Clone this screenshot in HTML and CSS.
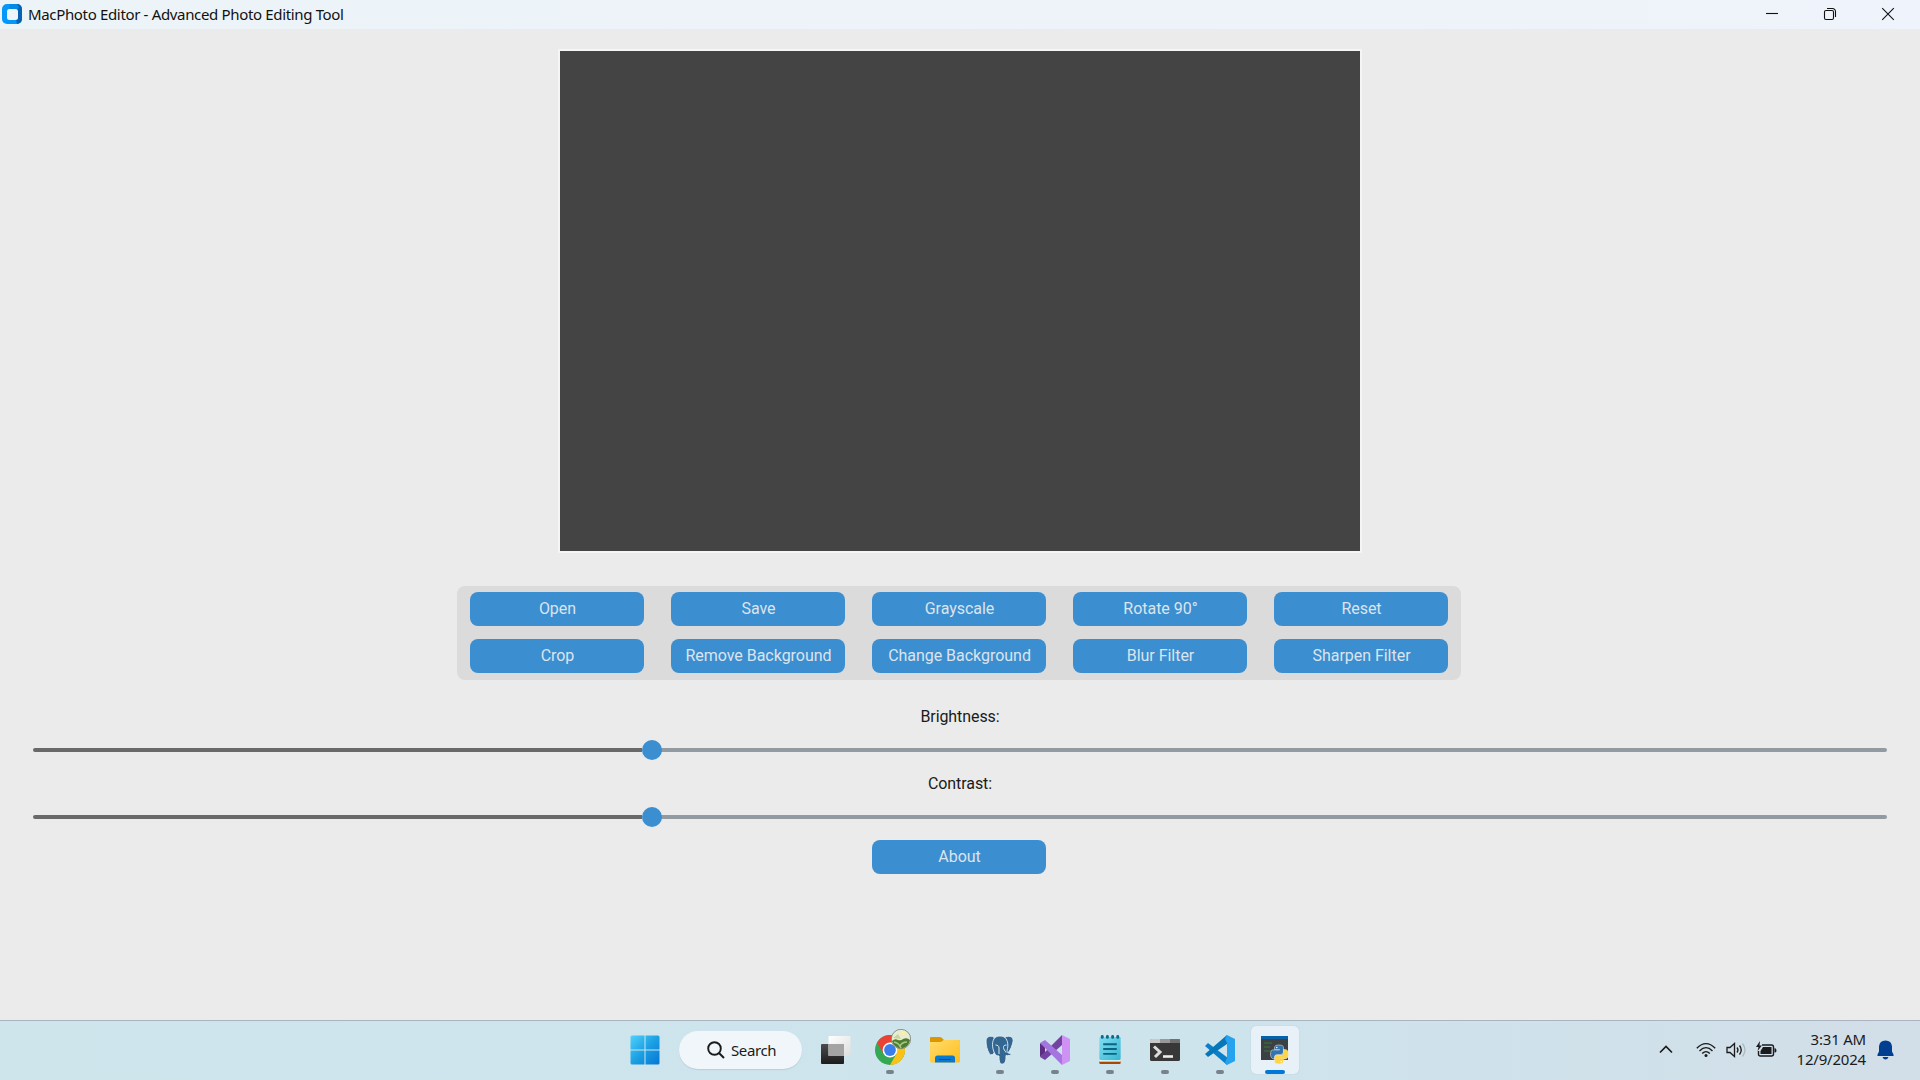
FILE: index.html
```html
<!DOCTYPE html>
<html lang="en">
<head>
<meta charset="utf-8">
<title>MacPhoto Editor</title>
<link rel="stylesheet" href="styles.css">
</head>
<body>
<header class="titlebar">
  <svg class="app-icon" width="20" height="20" viewBox="0 0 20 20"><rect width="20" height="20" rx="5" fill="#0498fb"/><path d="M15 0a5 5 0 0 1 5 5v10a5 5 0 0 1-5 5l-1-5 1-10z" fill="#0663b1"/><path d="M7 0h8l2 3-2 3H8z" fill="#0689e5"/><rect x="5" y="5" width="11" height="11" rx="2.5" fill="#eef5fa"/></svg>
  <span class="window-title">MacPhoto Editor - Advanced Photo Editing Tool</span>
  <div class="window-controls">
    <button class="control"><svg width="14" height="14" viewBox="0 0 14 14"><path d="M1 6.5h12"/></svg></button>
    <button class="control"><svg width="14" height="14" viewBox="0 0 14 14"><rect x="1.5" y="3.5" width="9" height="9" rx="1.5"/><path d="M4 1.5h5.5a3 3 0 0 1 3 3V10"/></svg></button>
    <button class="control"><svg width="14" height="14" viewBox="0 0 14 14"><path d="M1.2 1.2l11.6 11.6M12.8 1.2L1.2 12.8"/></svg></button>
  </div>
</header>
<main class="editor">
  <div class="canvas"></div>
  <div class="tools">
    <button class="btn">Open</button>
    <button class="btn">Save</button>
    <button class="btn">Grayscale</button>
    <button class="btn">Rotate 90°</button>
    <button class="btn">Reset</button>
    <button class="btn">Crop</button>
    <button class="btn">Remove Background</button>
    <button class="btn">Change Background</button>
    <button class="btn">Blur Filter</button>
    <button class="btn">Sharpen Filter</button>
  </div>
  <div class="adjust">
    <span class="label">Brightness:</span>
    <div class="slider"><span class="filled"></span><span class="knob"></span><span class="rest"></span></div>
  </div>
  <div class="adjust">
    <span class="label">Contrast:</span>
    <div class="slider"><span class="filled"></span><span class="knob"></span><span class="rest"></span></div>
  </div>
  <button class="btn about">About</button>
</main>
<footer class="taskbar">
  <div class="apps">
    <div class="app start"><svg width="30" height="30" viewBox="0 0 30 30"><defs><linearGradient id="win" gradientUnits="userSpaceOnUse" x1="0" y1="0" x2="30" y2="30"><stop offset="0" stop-color="#50d3fd"/><stop offset=".5" stop-color="#1ba0e4"/><stop offset="1" stop-color="#0574d3"/></linearGradient></defs><path fill="url(#win)" d="M2 .5h12.500v14H.5V2Q.5.500 2 .5zM15.500.500H28q1.500 0 1.500 1.500v12.500h-14zM.500 15.500h14v14H2Q.500 29.500.500 28zM15.500 15.500h14V28q0 1.500-1.500 1.500H15.500z"/></svg></div>
    <div class="search"><svg width="18" height="18" viewBox="0 0 18 18" fill="none" stroke="#1b1b1b" stroke-width="1.900"><circle cx="7.500" cy="7.500" r="6.300"/><path d="M12 12l5 5"/></svg><span>Search</span></div>
    <div class="app taskview"><svg width="30" height="30" viewBox="0 0 30 30"><defs><linearGradient id="tvd" x1="0" y1="0" x2="0" y2="1"><stop offset="0" stop-color="#4b4b4b"/><stop offset="1" stop-color="#1c1c1c"/></linearGradient><linearGradient id="tvl" x1="0" y1="0" x2="1" y2="1"><stop offset="0" stop-color="#fff"/><stop offset="1" stop-color="#dedede"/></linearGradient></defs><rect x="0" y="9" width="23" height="20" rx="1" fill="url(#tvd)"/><rect x="7.500" y="1" width="22" height="20" rx="1" fill="url(#tvl)"/><path d="M7.500 9H23v12H7.500z" fill="#a4a4a4"/></svg></div>
    <div class="app chrome running"><svg width="36" height="36" viewBox="0 0 36 36"><circle cx="15" cy="21" r="15" fill="#34a853"/><path d="M2 13.500A15 15 0 0 1 28 13.500H15L8.500 24.750z" fill="#ea4335"/><path d="M28 13.500A15 15 0 0 1 15 36l6.500-11.250L15 13.500z" fill="#fbc116"/><circle cx="15" cy="21" r="7.400" fill="#fff"/><circle cx="15" cy="21" r="5.900" fill="#3b7ded"/><circle cx="26" cy="10" r="9.700" fill="#e9edd0" stroke="#777d75" stroke-width=".8"/><path d="M17 12q3-3 6-1 3 1 5-1 4-2 7 1-1 7-9 8.500-7-1-9-7.500z" fill="#4c7c30"/><path d="M19 13q5 1 7 6M25 17q2-4 7-4" stroke="#a9c884" stroke-width="1.600" fill="none"/><circle cx="28.500" cy="4" r="1.700" fill="#fff19b"/><path d="M18 9l5-4 3 5z" fill="#c5d59c"/></svg></div>
    <div class="app folder"><svg width="32" height="28" viewBox="0 0 32 28"><defs><linearGradient id="fold" x1="0" y1="0" x2="1" y2="1"><stop offset="0" stop-color="#ffdc6d"/><stop offset="1" stop-color="#ffbd1b"/></linearGradient></defs><path d="M1 2Q1 1 2 1h9q1.500 0 2.500 1.500L15 4h15q1 0 1 1v9H1z" fill="#dc9700"/><path d="M1 6h10q1.500 0 2.500-1l1-1H30q1 0 1 1v20q0 1.500-1.500 1.500h-27Q1 26.500 1 25z" fill="url(#fold)"/><path d="M6 26.500V22q0-2.500 2.500-2.500h15Q26 19.500 26 22v4.500z" fill="#0879d0"/><path d="M10 23.500h12" stroke="#064d99"/></svg></div>
    <div class="app postgres running"><svg width="30" height="30" viewBox="0 0 30 30"><g fill="#336791" stroke="#e3eff5" stroke-width=".9"><path d="M9 2C5 0 1 2 1 6c0 4 1 9 3.500 13 1.500 2 3 1 4.500-1l2-3z"/><path d="M20 2c5-2 9 0 8 5-1 4-2 7-5 11l-3-2z"/><path d="M10 2.500c3-2 7-2 10 0 3 3 3.500 8 2 13 0 2 1 3 5 3-1 2-4 2.500-6 2 0 4 0 8-3.500 8.500-3 .5-3.500-3-3.500-8-2 0-4-1-4.500-3C7 13 6.500 6 10 2.500z"/></g><path d="M14 19v-6c0-2-1.500-3-3.500-3M21.500 10c-2.500 0-3 1-3 2.500 0 2 1.500 3 2.500 5M10 19c-2 1-3 1-4 .5" stroke="#dceaf1" fill="none"/></svg></div>
    <div class="app vs running"><svg width="30" height="30" viewBox="0 0 30 30"><path d="M0 8v14l5-4v-7z" fill="#5b2e83"/><path d="M5 25L22 10V0L8 14 0 22z" fill="#7243a0"/><path d="M0 8l5-3 17 15v10L5 13z" fill="#a575df"/><path d="M22 0l8 4v22l-8 4z" fill="#ce91f4"/></svg></div>
    <div class="app notepad running"><svg width="24" height="31" viewBox="0 0 24 32"><defs><linearGradient id="note" x1="0" y1="0" x2="1" y2="1"><stop stop-color="#80def2"/><stop offset="1" stop-color="#39b5d1"/></linearGradient></defs><path d="M1 27h22v3q0 1-1 1H2q-1 0-1-1z" fill="#a94800"/><path d="M1 26h22v2.500H1z" fill="#fff"/><rect x="1" y="3" width="22" height="24" rx="1.500" fill="url(#note)"/><path d="M5 10.500h14M5 15.500h14M5 20.500h14" stroke="#086583" stroke-width="2"/><path d="M4 2.500v1M9.300 2.500v1M14.700 2.500v1M20 2.500v1" stroke="#076c89" stroke-width="3" stroke-linecap="round"/></svg></div>
    <div class="app terminal running"><svg width="30" height="24" viewBox="0 0 30 24"><rect y="1" width="30" height="22" rx="1.500" fill="#383838"/><path d="M0 5V2q0-1 1-1h9v4z" fill="#c9c9c9"/><path d="M10 1h10v4H10z" fill="#999"/><path d="M20 1h9q1 0 1 1v3H20z" fill="#707070"/><path d="M4 8.500l6 5.500-5 5" stroke="#ddd" stroke-width="3" fill="none"/><path d="M13 18.500h10" stroke="#eee" stroke-width="2.600"/></svg></div>
    <div class="app code running"><svg width="30" height="30" viewBox="0 0 30 30"><path d="M0 11l3-3 20 15-1 7z" fill="#0a7fca"/><path d="M0 19L22 0v9L3 22z" fill="#0877b9"/><path d="M22 0l8 4v22l-8 4-2-3 2-4V8l-2-4z" fill="#25a3ef"/></svg></div>
    <div class="app python running active"><svg width="30" height="30" viewBox="0 0 30 30"><path d="M1 1h27v24H1z" fill="#3d4144"/><path d="M1 1h27v3H1z" fill="#0862a5"/><path d="M4 8h8M4 12h6M4 16h7" stroke="#377b3a" stroke-width="1.200"/><g stroke="#eef2f5" stroke-width=".5"><path d="M14.500 14.500v-2q0-2.500 4.500-2.500t4.500 2.500V17q0 2.500-2.500 2.500h-4q-2.500 0-2.500 3V24q-4 0-4-5t4-4h5v-.500z" fill="#3474ac"/><path d="M23.500 14.500q5-.5 5 4.500t-4 5h-5v.5h4v2q0 2.500-4.500 2.500t-4.500-2.500v-4q0-2.500 2.500-2.500h4q2.500 0 2.500-3z" fill="#ffd548"/></g><circle cx="16.800" cy="12.500" r=".8" fill="#fff"/><circle cx="21.200" cy="26.500" r=".8" fill="#fff"/></svg></div>
  </div>
  <div class="tray">
    <svg class="chevron" width="14" height="9" viewBox="0 0 14 9" fill="none" stroke="#1b1b1b" stroke-width="1.700"><path d="M1 7.500L7 1.500l6 6"/></svg>
    <svg class="wifi" width="20" height="16" viewBox="0 0 20 16" fill="none" stroke="#1b1b1b" stroke-width="1.400"><path d="M.800 6.200q9.200-9.200 18.400 0M3.500 8.900q6.500-6.500 13 0M6.200 11.500q3.800-3.800 7.600 0"/><circle cx="10" cy="13.500" r="1.500" fill="#1b1b1b" stroke="none"/></svg>
    <svg class="volume" width="21" height="16" viewBox="0 0 21 16" fill="none" stroke="#1b1b1b" stroke-width="1.300"><path d="M1 5.500h3l4.500-4v13L4 10.500H1zM11 5.500q2 2.500 0 5M13.500 3.500q3.500 4.500 0 9"/><path d="M16.500 1.500q5 6.500 0 13" stroke="#aeb9c0"/></svg>
    <svg class="battery" width="21" height="17" viewBox="0 0 21 17"><path d="M6 4h9.500q2 0 2 2v7q0 2-2 2h-11q-2 0-2-2v-3" fill="none" stroke="#1b1b1b" stroke-width="1.400"/><path d="M7 6h8.500v7h-11v-3z" fill="#1b1b1b"/><path d="M18.500 7q2 0 2 2.500t-2 2zM4 0L0 6h2.500L1.500 10 6 4.500H3.500z" fill="#1b1b1b"/></svg>
    <div class="clock"><span class="time">3:31 AM</span><span class="date">12/9/2024</span></div>
    <svg class="bell" width="17" height="20" viewBox="0 0 17 20"><path d="M8.500.500q6 0 6.500 6v5l1.500 3v1.500H.500v-1.500l1.500-3v-5q.500-6 6.500-6zM5.500 17h6q-1 2.500-3 2.500t-3-2.500z" fill="#003e92"/></svg>
  </div>
</footer>
</body>
</html>
```
FILE: styles.css
```css
* { box-sizing: border-box; }
body {
  margin: 0;
  width: 1920px;
  height: 1080px;
  overflow: hidden;
  display: flex;
  flex-direction: column;
  background: #ebebeb;
  font-family: Roboto, sans-serif;
}
button { border: 0; padding: 0; font: inherit; }
.titlebar {
  height: 29px;
  flex: none;
  display: flex;
  align-items: center;
  padding: 0 3px 1px 2px;
  background: linear-gradient(90deg, #ecf4f8, #eff3fb);
}
.app-icon { margin-right: 6px; }
.window-title {
  font: 15px/20px "Noto Sans", sans-serif;
  letter-spacing: -.34px;
  color: #111;
  white-space: nowrap;
}
.window-controls { display: flex; margin-left: auto; }
.control {
  width: 58px;
  height: 28px;
  display: flex;
  align-items: center;
  justify-content: center;
  background: none;
}
.control svg { fill: none; stroke: #111; stroke-width: 1.1; }
.editor {
  flex: 1;
  display: flex;
  flex-direction: column;
  align-items: center;
  padding: 20px 33px 0;
}
.canvas {
  width: 804px;
  height: 504px;
  flex: none;
  background: #444;
  border: 2px solid #f5f5f5;
}
.tools {
  width: 1004px;
  height: 94px;
  margin: 33px 2px 23px 0;
  padding: 6px 13px;
  display: grid;
  grid-template-columns: repeat(5, 174px);
  grid-auto-rows: 34px;
  gap: 13px 27px;
  border-radius: 8px;
  background: #dbdbdb;
}
.btn {
  width: 174px;
  height: 34px;
  border-radius: 8px;
  background: #3b8ed0;
  color: #dce4ee;
  font-size: 16px;
  line-height: 34px;
  padding-left: 1px;
  letter-spacing: -.03px;
  white-space: nowrap;
}
.adjust {
  width: 100%;
  height: 67px;
  display: flex;
  flex-direction: column;
  align-items: center;
}
.label { height: 37px; padding-top: 4px; font-size: 16px; line-height: 20px; letter-spacing: -.08px; color: #1a1a1a; }
.slider { width: 100%; height: 20px; display: flex; align-items: center; }
.filled { width: 609px; height: 4px; margin-right: -2px; border-radius: 2px 0 0 2px; background: #696969; }
.knob { width: 20px; height: 20px; margin-left: 2px; border-radius: 50%; background: #3b8ed0; z-index: 1; }
.rest { flex: 1; height: 4px; margin-left: -2px; border-radius: 0 2px 2px 0; background: #939ba2; }
.about { margin: 3px 2px 0 0; }
.taskbar {
  height: 60px;
  flex: none;
  display: grid;
  grid-template-columns: 619px 1fr auto;
  border-top: 1px solid #a9b4be;
  background: linear-gradient(90deg, #cfe5ec, #cee4ed 65%, #d2dee8);
}
.apps { grid-column: 2; display: flex; align-items: center; padding-bottom: 2px; }
.app {
  width: 48px;
  height: 48px;
  margin-right: 7px;
  display: flex;
  align-items: center;
  justify-content: center;
  position: relative;
  border-radius: 5px;
}
.start { width: 53px; margin-right: 7px; }
.start svg { margin-right: 1px; }
.search {
  width: 123px;
  height: 38px;
  margin-right: 9px;
  padding-left: 28px;
  display: flex;
  align-items: center;
  gap: 6px;
  border-radius: 19px;
  background: #f0f6fa;
  box-shadow: 0 1px 1px #b7ced8;
  font: 15px/20px "Noto Sans", sans-serif;
  letter-spacing: -.4px;
  color: #1b1b1b;
}
.taskview svg { margin-left: 2px; }
.chrome svg { margin: -6px 0 0 6px; }
.running::after {
  content: "";
  position: absolute;
  bottom: 0;
  left: 20px;
  width: 8px;
  height: 4px;
  border-radius: 2px;
  background: #76838a;
}
.active { background: #e8f1f7; box-shadow: 0 0 1px #a4b9c4; }
.active::after { left: 14px; width: 20px; background: #0078d7; }
.tray { display: flex; align-items: center; padding: 0 26px 2px 0; }
.wifi { margin-left: 23px; }
.volume { margin-left: 10px; }
.battery { margin-left: 9px; }
.clock {
  width: 89px;
  display: flex;
  flex-direction: column;
  align-items: flex-end;
  padding-bottom: 2px;
  font: 15px/20px "Noto Sans", sans-serif;
  letter-spacing: -.2px;
  color: #1b1b1b;
}
.bell { margin-left: 11px; }
```
